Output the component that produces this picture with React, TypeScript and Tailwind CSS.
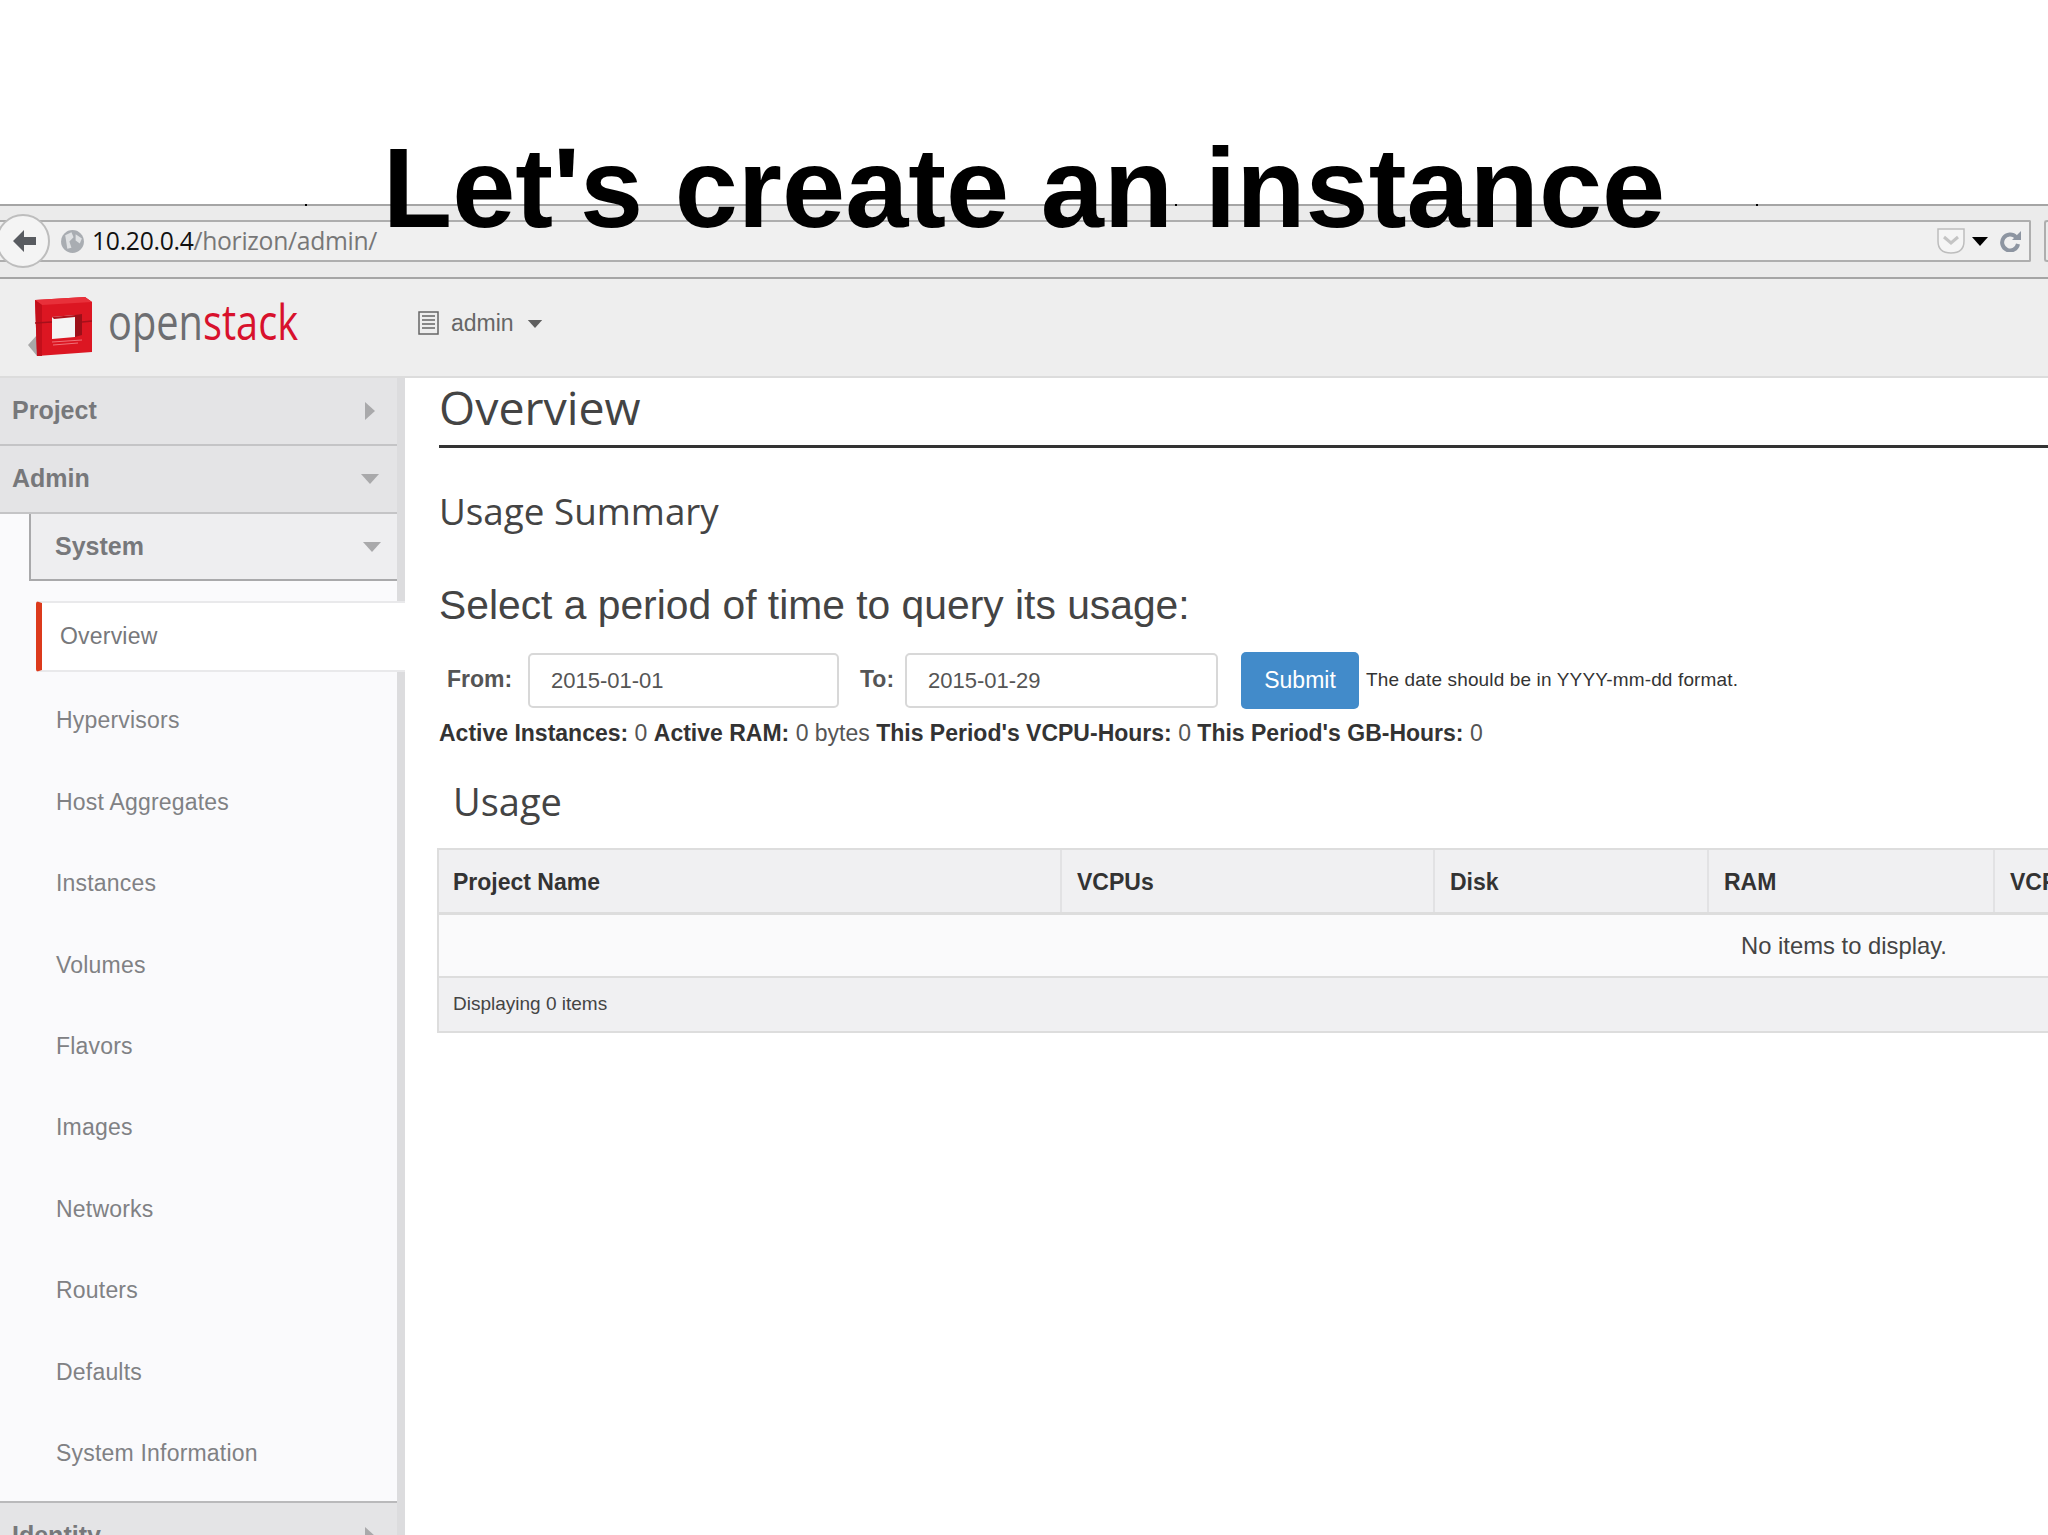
import React from 'react';

const systemItems = ['Hypervisors', 'Host Aggregates', 'Instances', 'Volumes', 'Flavors', 'Images', 'Networks', 'Routers', 'Defaults', 'System Information'];

function CaretDown({ className }: { className: string }) {
  return (
    <svg className={className} viewBox="0 0 18 10">
      <polygon points="0,0 18,0 9,10" fill="currentColor" />
    </svg>
  );
}

function CaretRight({ className }: { className: string }) {
  return (
    <svg className={className} viewBox="0 0 10 18">
      <polygon points="0,0 10,9 0,18" fill="currentColor" />
    </svg>
  );
}

function OpenstackCube() {
  return (
    <svg className="w-[67px] h-[64px] shrink-0 -mt-[2px]" viewBox="7 10 67 64">
      <polygon points="8,60 17,50 17,71" fill="#a8a8a8" />
      <polygon points="15,15 65,12 72,17 72,67 17,71" fill="#dc1622" />
      <polygon points="15,15 65,12 72,17 22,20" fill="#e8303a" />
      <polygon points="15,15 22,20 22,71 17,71" fill="#c30f1b" />
      <polygon points="32,32 55,30 55,52 32,54" fill="#f4f4f4" />
      <polygon points="55,30 62,29 62,50 55,52" fill="#9c0f18" />
      <polygon points="32,32 55,30 55,32 34,34" fill="#b0101a" />
      <path d="M15 38 L32 37 M62 37 L72 36" stroke="#a5101a" strokeWidth="1.5" />
      <path d="M32 57 L62 55 M33 60 L58 58" stroke="#f07078" strokeWidth="1" />
    </svg>
  );
}

function BrowserBar() {
  return (
    <div className="relative h-[75px] bg-[#ebebeb] border-t-2 border-[#a5a5a5] border-b-2 flex items-start pt-[14px]">
      <span className="absolute left-[305px] -top-[2px] w-[2px] h-[2px] bg-black" />
      <span className="absolute left-[1175px] -top-[2px] w-[2px] h-[2px] bg-black" />
      <span className="absolute left-[1756px] -top-[2px] w-[2px] h-[2px] bg-black" />
      <div className="absolute -left-[4px] top-[8px] w-[54px] h-[54px] rounded-full border-2 border-[#bdbdbd] bg-[#f4f4f4] flex items-center justify-end pr-[10px]">
        <svg className="w-[28px] h-[26px]" viewBox="0 0 26 26">
          <path d="M13 2 L2 13 L13 24 L13 17 L25 17 L25 9 L13 9 Z" fill="#585b60" />
        </svg>
      </div>
      <div className="flex-1 h-[42px] mr-[13px] border-2 border-l-0 border-[#aeaeae] rounded-r-[2px] bg-[#f0f0f0] flex items-center pl-[60px] pr-[7px]">
        <svg className="w-[25px] h-[25px] shrink-0" viewBox="0 0 24 24">
          <circle cx="12" cy="12" r="11" fill="#a9adb2" />
          <path d="M5 6 L11 3 L13 8 L9 12 L11 18 L7 19 Z M15 5 L21 9 L19 14 L15 11 Z" fill="#dfe1e3" />
        </svg>
        <span className="ml-[7px] text-[24.7px] leading-[30px] font-['Open_Sans',sans-serif] tracking-[-0.3px] text-[#111111]">
          10.20.0.4<span className="text-[#777777]">/horizon/admin/</span>
        </span>
        <svg className="ml-auto w-[28px] h-[26px]" viewBox="0 0 28 26">
          <path d="M1 1 H27 V13 Q27 25 14 25 Q1 25 1 13 Z" fill="#f5f5f5" stroke="#bdbdbd" strokeWidth="1.5" />
          <path d="M7 9 L14 15 L21 9" fill="none" stroke="#c4c4c4" strokeWidth="3" />
        </svg>
        <CaretDown className="ml-[7px] w-[16px] h-[9px] text-black" />
        <svg className="ml-[12px] w-[22px] h-[22px]" viewBox="0 0 22 22">
          <path d="M16 7 A8 8 0 1 0 18 14" fill="none" stroke="#8d95a1" strokeWidth="4" />
          <polygon points="21,1 21,10 12,10" fill="#8d95a1" />
        </svg>
      </div>
      <div className="w-[4px] h-[42px] border-2 border-r-0 border-[#aeaeae] rounded-l-[3px]" />
    </div>
  );
}

function TopHeader() {
  return (
    <div className="h-[99px] bg-[#eeeeee] border-b-2 border-[#dcdcdc] flex items-center">
      <div className="w-[418px] flex items-center pl-[27px] shrink-0">
        <OpenstackCube />
        <div className="ml-[14px] w-[190px] font-['Open_Sans',sans-serif] font-medium text-[50px] leading-[60px] whitespace-nowrap origin-left scale-x-[0.795] -mt-[13px]">
          <span className="text-[#6d6e71]">open</span>
          <span className="text-[#d8112c]">stack</span>
        </div>
      </div>
      <div className="flex items-center -mt-[10px]">
        <svg className="w-[21px] h-[24px]" viewBox="0 0 21 24">
          <rect x="1" y="1" width="19" height="22" fill="#eeeeee" stroke="#666666" strokeWidth="1.5" />
          <path d="M4 5 H17 M4 9 H17 M4 13 H17 M4 17 H17" stroke="#666666" strokeWidth="1.5" />
        </svg>
        <span className="ml-[12px] text-[23px] leading-[28px] text-[#666666]">admin</span>
        <CaretDown className="ml-[13px] w-[16px] h-[8px] mt-[3px] text-[#5f5f5f]" />
      </div>
    </div>
  );
}

function SideHeader({ label, open }: { label: string; open: boolean }) {
  return (
    <div className="h-[68px] bg-[#e4e4e6] border-b-2 border-[#c4c4c6] flex items-center justify-between pl-[12px] pr-[18px]">
      <span className="text-[25px] font-bold text-[#77787b]">{label}</span>
      {open ? <CaretDown className="w-[18px] h-[10px] text-[#a9a9ab]" /> : <CaretRight className="w-[10px] h-[18px] mr-[4px] text-[#a9a9ab]" />}
    </div>
  );
}

function Sidebar() {
  return (
    <aside className="w-[405px] shrink-0 bg-[#fafafc] border-r-[8px] border-[#dcdcde] flex flex-col">
      <SideHeader label="Project" open={false} />
      <SideHeader label="Admin" open={true} />
      <div className="ml-[29px] h-[67px] bg-[#eeeef0] border-l-2 border-b-2 border-[#a9a9ab] flex items-center justify-between pl-[24px] pr-[16px]">
        <span className="text-[25px] font-bold text-[#77787b]">System</span>
        <CaretDown className="w-[18px] h-[10px] text-[#a9a9ab]" />
      </div>
      <div className="mt-[20px] ml-[36px] -mr-[8px] h-[71px] bg-white border-y-2 border-[#e9e9eb] border-l-[6px] border-l-[#dc3a1c] rounded-l-[3px] flex items-center pl-[18px] text-[23px] tracking-[0.2px] text-[#77787b]">
        Overview
      </div>
      <ul className="pt-[8px] pb-[7px]">
        {systemItems.map((item) => (
          <li key={item} className="h-[81.4px] flex items-center pl-[56px] text-[23px] tracking-[0.2px] text-[#808184]">
            {item}
          </li>
        ))}
      </ul>
      <div className="h-[68px] bg-[#e4e4e6] border-t-2 border-[#b9b9bb] flex items-center justify-between pl-[12px] pr-[18px]">
        <span className="text-[25px] font-bold text-[#77787b]">Identity</span>
        <CaretRight className="w-[10px] h-[18px] mr-[4px] text-[#a9a9ab]" />
      </div>
    </aside>
  );
}

function UsageTable() {
  return (
    <div className="mt-[25px] -ml-[2px] w-[2814px] border-2 border-[#dddddd] text-[#333333]">
      <div className="flex h-[65px] bg-[#f0f0f2] border-b-[3px] border-[#dddddd] font-bold text-[23px] leading-[64px]">
        <div className="w-[623px] pl-[14px] border-r-2 border-[#e2e2e4]">Project Name</div>
        <div className="w-[373px] pl-[15px] border-r-2 border-[#e2e2e4]">VCPUs</div>
        <div className="w-[274px] pl-[15px] border-r-2 border-[#e2e2e4]">Disk</div>
        <div className="w-[286px] pl-[15px] border-r-2 border-[#e2e2e4]">RAM</div>
        <div className="w-[300px] pl-[15px]">VCPU Hours</div>
      </div>
      <div className="h-[63px] bg-[#fafafb] border-b-2 border-[#dddddd] flex items-center justify-center text-[23.8px] text-[#444444]">
        No items to display.
      </div>
      <div className="h-[53px] bg-[#f0f0f2] flex items-center pl-[14px] text-[19px] text-[#444444]">Displaying 0 items</div>
    </div>
  );
}

function UsageForm() {
  return (
    <div className="mt-[25px] h-[57px] flex items-center text-[#555555]">
      <label className="ml-[8px] w-[81px] text-[23px] font-bold -mt-[3px]">From:</label>
      <div className="w-[311px] h-[55px] border-2 border-[#d8d8d8] rounded-[5px] bg-white flex items-center pl-[21px] text-[22px]">2015-01-01</div>
      <label className="ml-[21px] w-[45px] text-[23px] font-bold -mt-[3px]">To:</label>
      <div className="w-[313px] h-[55px] border-2 border-[#d8d8d8] rounded-[5px] bg-white flex items-center pl-[21px] text-[22px]">2015-01-29</div>
      <button className="ml-[23px] w-[118px] h-[57px] bg-[#428bca] rounded-[5px] text-white text-[23px]">Submit</button>
      <span className="ml-[7px] text-[19px] tracking-[0.14px] text-[#333333]">The date should be in YYYY-mm-dd format.</span>
    </div>
  );
}

function MainContent() {
  return (
    <main className="flex-1 min-w-0 pl-[34px] text-[#333333]">
      <h1 className="h-[70px] border-b-[3px] border-[#333333] font-['Open_Sans',sans-serif] text-[46.5px] leading-[58px] text-[#444444]">Overview</h1>
      <h2 className="mt-[41px] font-['Open_Sans',sans-serif] text-[36.8px] leading-[44px] text-[#444444]">Usage Summary</h2>
      <h3 className="mt-[50px] text-[40.8px] leading-[44px] text-[#444444]">Select a period of time to query its usage:</h3>
      <UsageForm />
      <p className="mt-[10px] text-[23px] leading-[28px] whitespace-nowrap text-[#555555]">
        <b className="text-[#333333]">Active Instances:</b> 0 <b className="text-[#333333]">Active RAM:</b> 0 bytes <b className="text-[#333333]">This Period's VCPU-Hours:</b> 0 <b className="text-[#333333]">This Period's GB-Hours:</b> 0
      </p>
      <h3 className="mt-[32px] ml-[14px] font-['Open_Sans',sans-serif] text-[38px] leading-[44px] text-[#444444]">Usage</h3>
      <UsageTable />
    </main>
  );
}

export default function App() {
  return (
    <div className="relative w-[2048px] h-[1535px] overflow-hidden bg-white font-['Liberation_Sans',sans-serif]">
      <h1 className="absolute inset-x-0 top-[121px] z-10 text-center text-[113.5px] leading-[134px] font-bold text-black">Let's create an instance</h1>
      <div className="h-[204px]" />
      <BrowserBar />
      <TopHeader />
      <div className="flex">
        <Sidebar />
        <MainContent />
      </div>
    </div>
  );
}
